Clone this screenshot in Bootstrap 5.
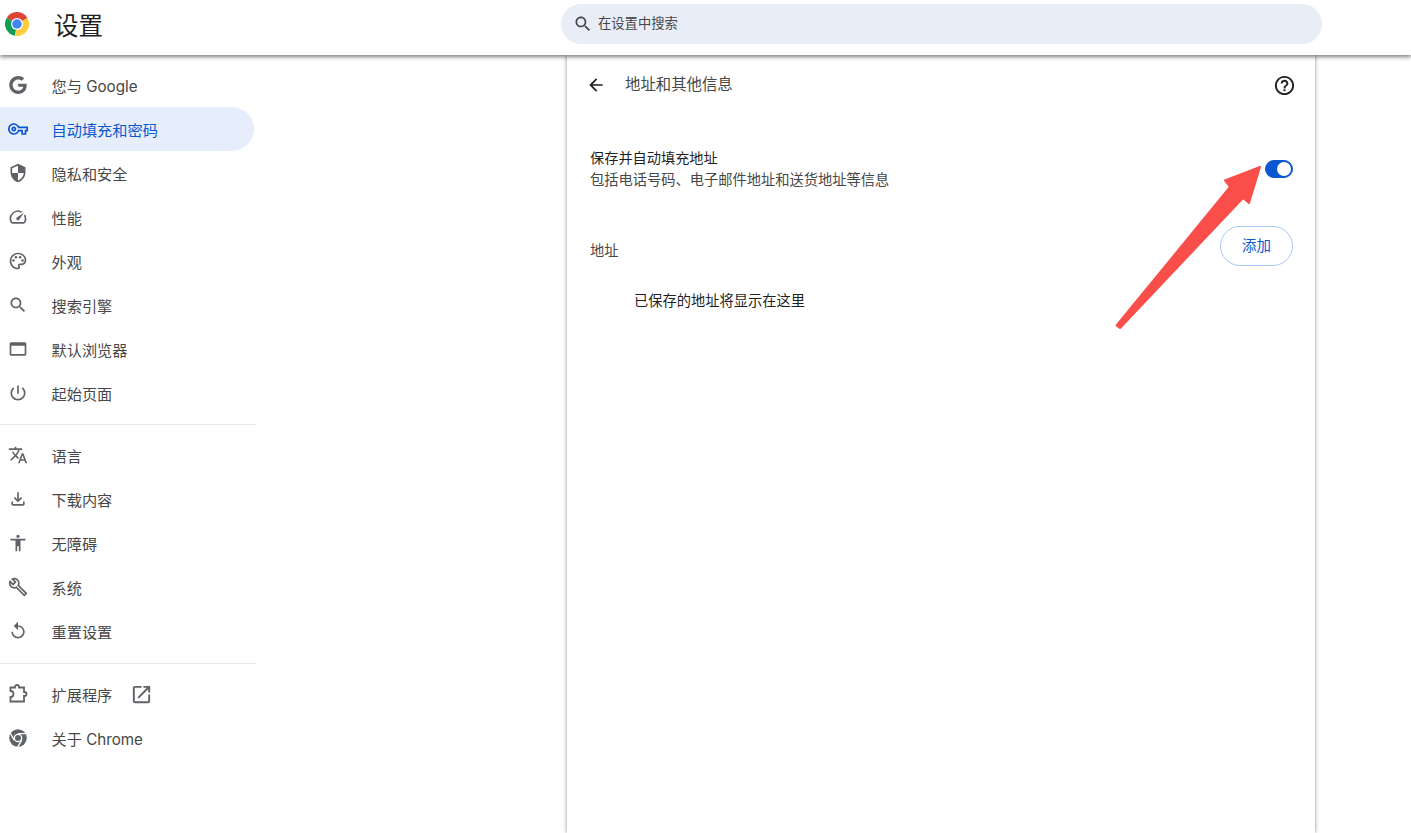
<!DOCTYPE html>
<html lang="zh-CN">
<head>
  <meta charset="UTF-8" />
  <meta name="viewport" content="width=device-width, initial-scale=1" />
  <title>设置 - 地址和其他信息</title>
  <link href="https://cdn.jsdelivr.net/npm/bootstrap@5.3.3/dist/css/bootstrap.min.css" rel="stylesheet" />
  <style>
    html, body { height: 100%; }
    body {
      background: #fff;
      overflow: hidden;
      font-family: Inter, "Noto Sans CJK SC", sans-serif;
      font-size: 14.25px;
      color: #1f1f1f;
    }
    .top-bar {
      height: 55px;
      background: #fff;
      box-shadow: 0 2px 4px rgba(0, 0, 0, .5);
      position: relative;
      z-index: 2;
    }
    .brand-area { width: 561px; padding-left: 5px; }
    .brand-area svg { margin-top: -7px; }
    .brand-title { font-size: 24.5px; margin-left: 25px; margin-top: -2px; color: #1f1f1f; }
    .search-box {
      width: 761px;
      height: 40px;
      margin-top: -7px;
      border-radius: 20px;
      background: #e9edf7;
      padding-left: 12px;
      color: #474747;
      font-size: 13.3px;
    }
    .search-box svg { margin-right: 5px; }
    .page-body { height: calc(100% - 55px); }
    .side-menu { width: 256px; padding-top: 8px; flex: none; font-size: 15.2px; }
    .side-item {
      height: 44px;
      width: 254px;
      padding-left: 8px;
      color: #474747;
      border-radius: 0 22px 22px 0;
      text-decoration: none;
    }
    .side-item svg { fill: #5f6368; flex: none; }
    .side-item .side-label { padding-top: 5px; margin-left: 23.5px; }
    .side-item.is-active { background: #e6eefb; color: #0b57d0; }
    .side-item.is-active svg { fill: #0b57d0; }
    .side-item .side-ext { margin-left: 18px; margin-top: 1px; }
    .side-rule { height: 1px; background: #e8e8e8; margin: 9px 0 8px; flex: none; }
    .side-rule-low { margin-top: 10px; }
    .ext-glyph { fill: none !important; stroke: #5f6368; stroke-width: 1.8; }
    .content-col { padding-left: 311px; }
    .panel {
      width: 748px;
      height: 100%;
      background: #fff;
      box-shadow: 0 0 4px rgba(0, 0, 0, .45);
    }
    .panel-head { height: 60px; padding: 0 19px 0 19px; }
    .panel-head .panel-title { margin-left: 19px; color: #474747; font-size: 15.4px; }
    .auto-row { padding: 32px 22px 0 23px; }
    .auto-row .sub-text { color: #474747; line-height: 22px; }
    .auto-row .main-text { line-height: 22px; font-size: 14.2px; }
    .switch-wrap { min-height: 0; }
    .pill-switch.form-check-input,
    .pill-switch.form-check-input:checked {
      width: 28px;
      height: 18px;
      margin: 0;
      background-color: #0b57d0;
      border-color: #0b57d0;
      background-image: url("data:image/svg+xml,%3csvg xmlns='http://www.w3.org/2000/svg' viewBox='-4 -4 8 8'%3e%3ccircle r='3.5' fill='%23fff'/%3e%3c/svg%3e");
      float: none;
    }
    .addr-row { padding: 0 22px 0 23px; margin-top: 35px; height: 40px; }
    .addr-row .addr-label { color: #474747; margin-top: 14px; }
    .add-btn {
      width: 73px;
      height: 40px;
      padding: 0;
      border-radius: 20px;
      border: 1px solid #a8c7fa;
      color: #0b57d0;
      background: #fff;
      font-size: 14.5px;
    }
    .empty-note { padding: 24px 0 0 67px; line-height: 22px; }
    .mark-arrow { position: absolute; left: 0; top: 0; z-index: 3; pointer-events: none; }
  </style>
</head>
<body>
  <header class="top-bar d-flex align-items-center">
    <div class="brand-area d-flex align-items-center">
      <svg width="24" height="24" viewBox="0 0 48 48">
        <path fill="#db4437" d="M24 24L44.800 12A24 24 0 0 0 3.200 12z"/>
        <path fill="#0f9d58" d="M24 24L3.200 12A24 24 0 0 0 20 47.700z"/>
        <path fill="#ffcd40" d="M24 24L20 47.700A24 24 0 0 0 44.800 12z"/>
        <circle cx="24" cy="24" r="12" fill="#fff"/>
        <circle cx="24" cy="24" r="9.500" fill="#4285f4"/>
      </svg>
      <span class="brand-title">设置</span>
    </div>
    <div class="search-box d-flex align-items-center">
      <svg width="20" height="20" viewBox="0 0 24 24" fill="#474747"><path d="M15.5 14h-.79l-.28-.27C15.41 12.59 16 11.11 16 9.5 16 5.91 13.09 3 9.5 3S3 5.91 3 9.5 5.91 16 9.5 16c1.61 0 3.09-.59 4.23-1.57l.27.28v.79l5 4.99L20.49 19l-4.99-5zm-6 0C7.01 14 5 11.99 5 9.5S7.01 5 9.5 5 14 7.01 14 9.5 11.99 14 9.5 14z"/></svg>
      <span>在设置中搜索</span>
    </div>
  </header>

  <div class="page-body d-flex">
    <nav class="side-menu d-flex flex-column">
      <a class="side-item d-flex align-items-center" href="#">
        <svg width="20" height="20" viewBox="-1.500 -1.500 27 27"><path d="M12.24 10.285V14.4h6.806c-.275 1.765-2.056 5.174-6.806 5.174-4.095 0-7.439-3.389-7.439-7.574s3.345-7.574 7.439-7.574c2.33 0 3.891.989 4.785 1.849l3.254-3.138C18.189 1.186 15.479 0 12.24 0c-6.635 0-12 5.365-12 12s5.365 12 12 12c6.926 0 11.52-4.869 11.52-11.726 0-.788-.085-1.39-.189-1.989H12.24z"/></svg>
        <span class="side-label">您与 Google</span>
      </a>
      <a class="side-item is-active d-flex align-items-center" href="#">
        <svg width="20" height="20" viewBox="0 0 24 24"><path d="M22 19h-6v-4h-2.68c-1.14 2.42-3.6 4-6.32 4-3.86 0-7-3.14-7-7s3.14-7 7-7c2.72 0 5.17 1.58 6.32 4H24v6h-2v4zm-4-2h2v-4h2v-2H11.94l-.23-.67C11.01 8.34 9.11 7 7 7c-2.76 0-5 2.24-5 5s2.24 5 5 5c2.11 0 4.01-1.34 4.71-3.33l.23-.67H18v4zM7 15c-1.65 0-3-1.35-3-3s1.35-3 3-3 3 1.35 3 3-1.35 3-3 3zm0-4c-.55 0-1 .45-1 1s.45 1 1 1 1-.45 1-1-.45-1-1-1z"/></svg>
        <span class="side-label">自动填充和密码</span>
      </a>
      <a class="side-item d-flex align-items-center" href="#">
        <svg width="20" height="20" viewBox="0 0 24 24"><path d="M12 1L3 5v6c0 5.55 3.84 10.74 9 12 5.16-1.26 9-6.45 9-12V5l-9-4zm0 10.99h7c-.53 4.12-3.28 7.79-7 8.94V12H5V6.3l7-3.11v8.8z"/></svg>
        <span class="side-label">隐私和安全</span>
      </a>
      <a class="side-item d-flex align-items-center" href="#">
        <svg width="20" height="20" viewBox="0 0 24 24"><path d="M20.38 8.57l-1.23 1.85a8 8 0 0 1-.22 7.58H5.07A8 8 0 0 1 15.58 6.85l1.85-1.23A10 10 0 0 0 3.35 19a2 2 0 0 0 1.72 1h13.85a2 2 0 0 0 1.74-1 10 10 0 0 0-.27-10.44zm-9.79 6.84a2 2 0 0 0 2.83 0l5.66-8.49-8.49 5.66a2 2 0 0 0 0 2.83z"/></svg>
        <span class="side-label">性能</span>
      </a>
      <a class="side-item d-flex align-items-center" href="#">
        <svg width="20" height="20" viewBox="0 0 24 24"><path d="M12 22C6.49 22 2 17.51 2 12S6.49 2 12 2s10 4.04 10 9c0 3.31-2.69 6-6 6h-1.77c-.28 0-.5.22-.5.5 0 .12.05.23.13.33.41.47.64 1.06.64 1.67 0 1.38-1.12 2.5-2.5 2.5zm0-18c-4.41 0-8 3.59-8 8s3.59 8 8 8c.28 0 .5-.22.5-.5 0-.16-.08-.28-.14-.35-.41-.46-.63-1.05-.63-1.65 0-1.38 1.12-2.5 2.5-2.5H16c2.21 0 4-1.79 4-4 0-3.86-3.59-7-8-7z"/><circle cx="6.5" cy="11.5" r="1.5"/><circle cx="9.5" cy="7.5" r="1.5"/><circle cx="14.5" cy="7.5" r="1.5"/><circle cx="17.5" cy="11.5" r="1.5"/></svg>
        <span class="side-label">外观</span>
      </a>
      <a class="side-item d-flex align-items-center" href="#">
        <svg width="20" height="20" viewBox="0 0 24 24"><path d="M15.5 14h-.79l-.28-.27C15.41 12.59 16 11.11 16 9.5 16 5.91 13.09 3 9.5 3S3 5.91 3 9.5 5.91 16 9.5 16c1.61 0 3.09-.59 4.23-1.57l.27.28v.79l5 4.99L20.49 19l-4.99-5zm-6 0C7.01 14 5 11.99 5 9.5S7.01 5 9.5 5 14 7.01 14 9.5 11.99 14 9.5 14z"/></svg>
        <span class="side-label">搜索引擎</span>
      </a>
      <a class="side-item d-flex align-items-center" href="#">
        <svg width="20" height="20" viewBox="0 0 24 24"><path d="M20 4H4c-1.11 0-2 .9-2 2v12c0 1.1.89 2 2 2h16c1.1 0 2-.9 2-2V6c0-1.1-.89-2-2-2zm0 14H4V8h16v10z"/></svg>
        <span class="side-label">默认浏览器</span>
      </a>
      <a class="side-item d-flex align-items-center" href="#">
        <svg width="20" height="20" viewBox="0 0 24 24"><path d="M13 3h-2v10h2V3zm4.83 2.17l-1.42 1.42C17.99 7.86 19 9.81 19 12c0 3.87-3.13 7-7 7s-7-3.13-7-7c0-2.19 1.01-4.14 2.58-5.42L6.17 5.17C4.23 6.82 3 9.26 3 12c0 4.97 4.03 9 9 9s9-4.03 9-9c0-2.74-1.23-5.18-3.17-6.83z"/></svg>
        <span class="side-label">起始页面</span>
      </a>
      <div class="side-rule"></div>
      <a class="side-item d-flex align-items-center" href="#">
        <svg width="20" height="20" viewBox="0 0 24 24"><path d="M12.87 15.07l-2.54-2.51.03-.03c1.74-1.94 2.98-4.17 3.71-6.53H17V4h-7V2H8v2H1v1.99h11.17C11.5 7.92 10.44 9.75 9 11.35 8.07 10.32 7.3 9.19 6.69 8h-2c.73 1.63 1.73 3.17 2.98 4.56l-5.09 5.02L4 19l5-5 3.11 3.11.76-2.04zM18.5 10h-2L12 22h2l1.12-3h4.75L21 22h2l-4.5-12zm-2.62 7l1.62-4.33L19.12 17h-3.24z"/></svg>
        <span class="side-label">语言</span>
      </a>
      <a class="side-item d-flex align-items-center" href="#">
        <svg width="20" height="20" viewBox="0 0 24 24"><path d="M18 15v3H6v-3H4v3c0 1.1.9 2 2 2h12c1.1 0 2-.9 2-2v-3h-2zm-1-4l-1.41-1.41L13 12.17V4h-2v8.17L8.41 9.59 7 11l5 5 5-5z"/></svg>
        <span class="side-label">下载内容</span>
      </a>
      <a class="side-item d-flex align-items-center" href="#">
        <svg width="20" height="20" viewBox="0 0 24 24"><path d="M12 2c1.1 0 2 .9 2 2s-.9 2-2 2-2-.9-2-2 .9-2 2-2zm9 7h-6v13h-2v-6h-2v6H9V9H3V7h18v2z"/></svg>
        <span class="side-label">无障碍</span>
      </a>
      <a class="side-item d-flex align-items-center" href="#">
        <svg width="20" height="20" viewBox="0 0 24 24"><path d="M22.61 18.99l-9.08-9.08c.93-2.34.45-5.1-1.44-7C9.79.61 6.21.4 3.66 2.26L7.5 6.11 6.08 7.52 2.25 3.69C.39 6.23.6 9.82 2.9 12.11c1.86 1.86 4.57 2.35 6.89 1.48l9.11 9.11c.39.39 1.02.39 1.41 0l2.3-2.3c.4-.38.4-1.01 0-1.41zm-3 1.6l-9.46-9.46c-.61.45-1.29.72-2 .82-1.36.2-2.79-.21-3.83-1.25C3.37 9.76 2.93 8.5 3 7.26l3.09 3.09 4.24-4.24-3.09-3.09c1.24-.07 2.49.37 3.44 1.31 1.08 1.08 1.49 2.57 1.24 3.96-.12.71-.42 1.37-.88 1.96l9.45 9.45-.88.88z"/></svg>
        <span class="side-label">系统</span>
      </a>
      <a class="side-item d-flex align-items-center" href="#">
        <svg width="20" height="20" viewBox="0 0 24 24"><path d="M12 5V1L7 6l5 5V7c3.31 0 6 2.69 6 6s-2.69 6-6 6-6-2.69-6-6H4c0 4.42 3.58 8 8 8s8-3.58 8-8-3.58-8-8-8z"/></svg>
        <span class="side-label">重置设置</span>
      </a>
      <div class="side-rule side-rule-low"></div>
      <a class="side-item d-flex align-items-center" href="#">
        <svg class="ext-glyph" width="20" height="20" viewBox="0 0 20 20"><path d="M2.500 3.500H7V3a2 2 0 0 1 4 0v.5h5V8h.5a2 2 0 0 1 0 4H16v5.500H2.500V13a3 3 0 0 0 0-6z"/></svg>
        <span class="side-label">扩展程序</span>
        <svg class="side-ext" width="23" height="23" viewBox="0 0 24 24"><path d="M19 19H5V5h7V3H5c-1.11 0-2 .9-2 2v14c0 1.1.89 2 2 2h14c1.1 0 2-.9 2-2v-7h-2v7zM14 3v2h3.59l-9.83 9.83 1.41 1.41L19 6.41V10h2V3h-7z"/></svg>
      </a>
      <a class="side-item d-flex align-items-center" href="#">
        <svg width="20" height="20" viewBox="0 0 24 24"><circle cx="12" cy="12" r="10.5"/><circle cx="12" cy="12" r="5.2" fill="#fff"/><circle cx="12" cy="12" r="3.6"/><path d="M12 6.8h10M7.5 14.6L2.5 6M16.5 14.6L11.5 23" stroke="#fff" stroke-width="1.6" fill="none"/></svg>
        <span class="side-label">关于 Chrome</span>
      </a>
    </nav>

    <main class="content-col flex-grow-1">
      <section class="panel">
        <div class="panel-head d-flex align-items-center">
          <svg width="20" height="20" viewBox="0 0 24 24" fill="#1f1f1f"><path d="M20 11H7.83l5.59-5.59L12 4l-8 8 8 8 1.41-1.41L7.83 13H20v-2z"/></svg>
          <span class="panel-title flex-grow-1">地址和其他信息</span>
          <svg width="23" height="23" viewBox="0 0 24 24" fill="#1f1f1f"><path d="M11 18h2v-2h-2v2zm1-16C6.48 2 2 6.48 2 12s4.48 10 10 10 10-4.48 10-10S17.52 2 12 2zm0 18c-4.41 0-8-3.59-8-8s3.59-8 8-8 8 3.59 8 8-3.59 8-8 8zm0-14c-2.21 0-4 1.79-4 4h2c0-1.1.9-2 2-2s2 .9 2 2c0 2-3 1.75-3 5h2c0-2.25 3-2.5 3-5 0-2.21-1.79-4-4-4z"/></svg>
        </div>
        <div class="auto-row d-flex align-items-center justify-content-between">
          <div>
            <div class="main-text">保存并自动填充地址</div>
            <div class="sub-text">包括电话号码、电子邮件地址和送货地址等信息</div>
          </div>
          <div class="form-check form-switch switch-wrap m-0 p-0 d-flex">
            <input class="form-check-input pill-switch" type="checkbox" role="switch" checked />
          </div>
        </div>
        <div class="addr-row d-flex justify-content-between">
          <span class="addr-label">地址</span>
          <button class="btn add-btn" type="button">添加</button>
        </div>
        <div class="empty-note">已保存的地址将显示在这里</div>
      </section>
    </main>
  </div>

  <svg class="mark-arrow" width="1411" height="833" viewBox="0 0 1411 833">
    <path fill="#fa4e4a" stroke="#fa4e4a" stroke-width="2" stroke-linejoin="round" d="M1116.5 325.5L1120 328L1243 198L1249 203L1260 167L1225 180.500L1230 187z"/>
  </svg>
</body>
</html>
